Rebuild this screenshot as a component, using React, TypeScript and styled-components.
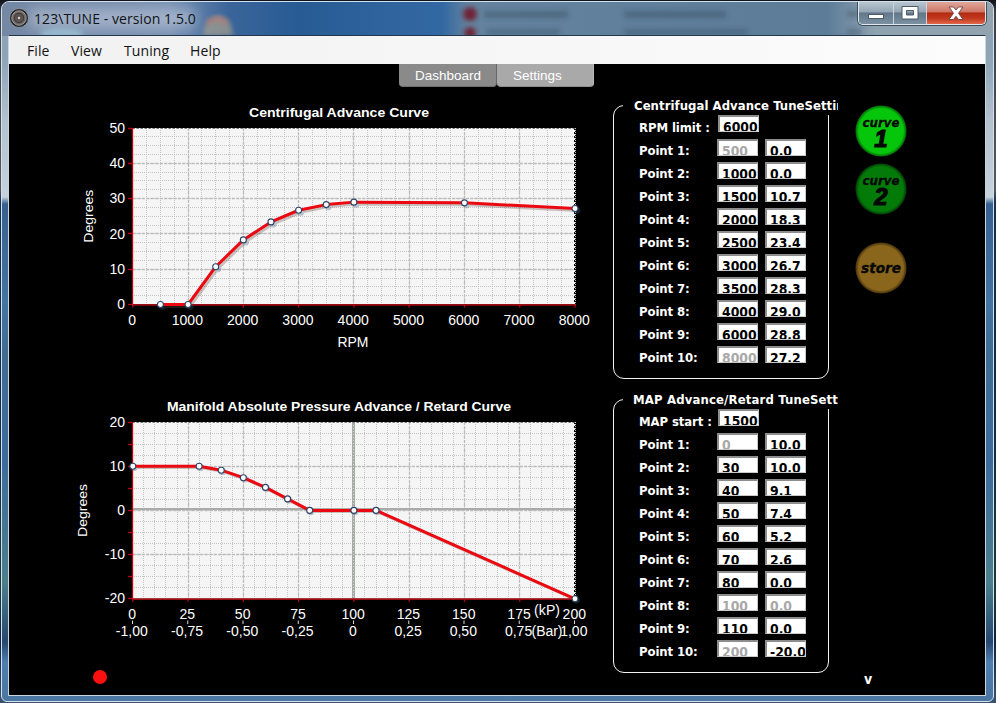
import React from "react";
import styled, { createGlobalStyle, css } from "styled-components";

const GlobalStyle = createGlobalStyle`
  * { box-sizing: border-box; }
  html, body { margin: 0; padding: 0; background: #0a1526; overflow: hidden; }
`;

const Desktop = styled.div`
  width: 996px;
  height: 703px;
  padding: 1px 2px 1px 1px;
  background: linear-gradient(180deg, #10121a 0, #3c4046 12px, #55585c 190px, #16304e 202px, #122a48 400px, #1c3a34 590px, #0e2240 640px, #3b5270 703px);
`;

const Window = styled.div`
  position: relative;
  width: 993px;
  height: 701px;
  padding: 0 8px 6px 6px;
  border: 1px solid #d3e2ef;
  border-radius: 8px 8px 6px 6px;
  overflow: hidden;
  background: linear-gradient(180deg, #8b9fb0 0, #8fa5b8 60px, #b4c2cf 120px, #c6d2dc 195px, #37608f 202px, #4474a2 300px, #3f6d92 350px, #3d6c9c 460px, #4b7f8c 580px, #27476f 640px, #4d7eae 660px, #4a76a0 701px);
`;

const Backdrop = styled.svg`
  position: absolute;
  left: 0;
  top: 0;
`;

const TitleBar = styled.header`
  position: relative;
  display: flex;
  align-items: flex-start;
  height: 33px;
  margin-right: -1px;
`;

const AppIcon = styled.svg`
  margin: 6px 0 0 1px;
  flex: none;
`;

const Title = styled.h1`
  margin: 6px 0 0 5px;
  font: 400 14px/21px "Open Sans", "Noto Sans", sans-serif;
  letter-spacing: 0.08px;
  color: #101318;
  white-space: nowrap;
`;

const Controls = styled.div`
  display: flex;
  margin-left: auto;
  height: 23px;
  border: 1px solid #e0e8ee;
  border-top: 0;
  border-radius: 0 0 5px 5px;
  overflow: hidden;
  box-shadow: 0 0 0 1px #3e4d5b;
`;

const ControlButton = styled.button<{ $width: number; $first?: boolean; $close?: boolean }>`
  width: ${(p) => p.$width}px;
  padding: 0;
  border: 0;
  border-left: ${(p) => (p.$first ? "0" : "1px solid #c9d4dd")};
  display: flex;
  align-items: center;
  justify-content: center;
  background: ${(p) =>
    p.$close
      ? "linear-gradient(180deg, #e0a79b 0, #cf7767 45%, #b3290f 50%, #c23a20 75%, #e2674a 100%)"
      : "linear-gradient(180deg, #b9c6d0 0, #93a5b4 45%, #62778a 50%, #7b90a1 100%)"};
`;

const Client = styled.div`
  position: relative;
  width: 978px;
  height: 661px;
  border: 1px solid #c8d6e2;
  border-top-color: #24364c;
  background: #000;
`;

const MenuBar = styled.nav`
  display: flex;
  height: 28px;
  padding-left: 18px;
  background: linear-gradient(90deg, #f1f1f2, #fcfcfc);
`;

const MenuItem = styled.span<{ $width: number }>`
  width: ${(p) => p.$width}px;
  font: 400 14px/29px "Open Sans", "Noto Sans", sans-serif;
  letter-spacing: 0.1px;
  color: #111;
  white-space: nowrap;
`;

const TabStrip = styled.div`
  display: flex;
  height: 23px;
  padding-left: 390px;
`;

const Tab = styled.div<{ $active?: boolean }>`
  width: ${(p) => (p.$active ? 98 : 97)}px;
  padding-left: 16px;
  border-radius: 0 0 4px 4px;
  border-bottom: 1px solid ${(p) => (p.$active ? "#707070" : "#8e8e8e")};
  border-right: 1px solid ${(p) => (p.$active ? "#666" : "#b8b8b8")};
  background: ${(p) => (p.$active ? "#8a8a8a" : "#a9a9a9")};
  font: 400 13.5px/23px "Liberation Sans", Arial, sans-serif;
  color: #fff;
`;

const Main = styled.main`
  display: flex;
  height: 608px;
`;

const ChartColumn = styled.section`
  width: 530px;
  margin: 8px 13px 0 61px;
  display: flex;
  flex-direction: column;
`;

const ChartSvg = styled.svg`
  display: block;
  flex: none;
  margin-bottom: 35px;
  font-family: "Liberation Sans", Arial, sans-serif;
  font-size: 14px;
  fill: #fff;
`;

const StatusLight = styled.div`
  width: 14px;
  height: 14px;
  margin: -15px 0 0 23px;
  border-radius: 50%;
  background: #fb1010;
`;

const PanelColumn = styled.section`
  display: flex;
  flex-direction: column;
  gap: 20px;
  width: 216px;
  padding-top: 18px;
`;

const boldText = css`
  font-family: "DejaVu Sans Condensed", "DejaVu Sans", Tahoma, sans-serif;
  font-stretch: condensed;
  font-weight: 700;
  white-space: nowrap;
`;

const Panel = styled.div`
  height: 274px;
  border: 1px solid #f2f2f2;
  border-radius: 11px;
`;

const Legend = styled.h2<{ $inset: number; $spacing: number }>`
  ${boldText}
  width: 215px;
  height: 19px;
  margin: -10px 0 0 9px;
  padding-left: ${(p) => p.$inset}px;
  overflow: hidden;
  background: #000;
  color: #fff;
  font-size: 13px;
  line-height: 19px;
  letter-spacing: ${(p) => p.$spacing}px;
`;

const Row = styled.label<{ $first?: boolean }>`
  display: flex;
  height: ${(p) => (p.$first ? 24 : 23)}px;
  padding-left: 25px;
`;

const RowLabel = styled.span<{ $first?: boolean }>`
  ${boldText}
  width: ${(p) => (p.$first ? 79 : 78)}px;
  padding-top: ${(p) => (p.$first ? 4 : 3)}px;
  font-size: 13px;
  line-height: 17px;
  letter-spacing: -0.1px;
  color: #fff;
`;

const Field = styled.span<{ $muted?: boolean }>`
  ${boldText}
  width: 41px;
  height: 17px;
  margin-right: 7px;
  padding: 0 0 0 3px;
  overflow: hidden;
  border-style: solid;
  border-width: 2px 1px 1px 2px;
  border-color: #8d8d8d #c9c9c9 #c9c9c9 #8d8d8d;
  background: #fff;
  color: ${(p) => (p.$muted ? "#a8a8a8" : "#000")};
  font-size: 13.8px;
  line-height: 21px;
`;

const ButtonColumn = styled.section`
  display: flex;
  flex-direction: column;
  width: 52px;
  margin-left: 26px;
  padding-top: 18px;
`;

const RoundButton = styled.button<{ $color: string; $edge: string; $gap: number; $shift?: number }>`
  display: flex;
  flex-direction: column;
  align-items: center;
  justify-content: center;
  flex: none;
  width: 52px;
  height: 52px;
  margin: 0 0 ${(p) => p.$gap}px;
  padding: ${(p) => p.$shift ?? 0}px 0 0;
  border: 0;
  border-radius: 50%;
  background: radial-gradient(circle closest-side, ${(p) => p.$color} 0 86%, ${(p) => p.$edge} 96%, #000 100%);
  color: #050805;
`;

const ButtonWord = styled.span<{ $size: number }>`
  font: italic 700 ${(p) => p.$size}px/12px "DejaVu Sans", Verdana, sans-serif;
  -webkit-text-stroke: 0.3px #050805;
`;

const ButtonDigit = styled.span`
  font: italic 700 24px/20px "Liberation Sans", Arial, sans-serif;
  -webkit-text-stroke: 1.2px #050805;
`;

const Version = styled.span`
  ${boldText}
  margin: auto 0 8px 9px;
  font-size: 14px;
  line-height: 16px;
  color: #fff;
`;

type Pt = [number, number];

interface ChartProps {
  title: string;
  titleX: number;
  titleWidth: number;
  top: number;
  plotTop: number;
  plotBottom: number;
  xMax: number;
  yMin: number;
  yMax: number;
  xMajor: number;
  xMinor: number;
  yTick: number;
  yLabelX: number;
  points: Pt[];
  shadow: number;
  children?: React.ReactNode;
}

const LEFT = 132.8;
const RIGHT = 575;

const range = (from: number, to: number, step: number) =>
  Array.from({ length: Math.round((to - from) / step) + 1 }, (_, i) => from + i * step);

function Chart(p: ChartProps) {
  const sx = (v: number) => LEFT + (v / p.xMax) * (RIGHT - LEFT);
  const sy = (v: number) => p.plotBottom - ((v - p.yMin) / (p.yMax - p.yMin)) * (p.plotBottom - p.plotTop);
  const snap = (v: number) => Math.floor(v) + 0.5;
  const line = p.points.map(([x, y]) => `${sx(x)},${sy(y)}`).join(" ");
  const midY = (p.plotTop + p.plotBottom) / 2;
  return (
    <ChartSvg width={530} height={260} viewBox={`70 ${p.top} 530 260`}>
      <text
        x={p.titleX}
        y={p.plotTop - 11}
        fontWeight={700}
        fontSize={13.6}
        textLength={p.titleWidth}
        lengthAdjust="spacingAndGlyphs"
      >
        {p.title}
      </text>
      <rect x={LEFT} y={p.plotTop} width={RIGHT - LEFT} height={p.plotBottom - p.plotTop} fill="#f5f5f5" />
      <g stroke="#c4c4c4" strokeWidth={1} strokeDasharray="1 1">
        {range(0, p.xMax, p.xMinor).map((v) => (
          <line key={`x${v}`} x1={snap(sx(v))} x2={snap(sx(v))} y1={p.plotTop} y2={p.plotBottom} />
        ))}
        {range(p.yMin, p.yMax, 2.5).map((v) => (
          <line key={`y${v}`} y1={snap(sy(v))} y2={snap(sy(v))} x1={132} x2={575} />
        ))}
      </g>
      <g stroke="#bcbcbc" strokeWidth={1.3} strokeDasharray="3 1.5">
        {range(p.xMajor, p.xMax - p.xMajor, p.xMajor).map((v) => (
          <line key={`x${v}`} x1={snap(sx(v))} x2={snap(sx(v))} y1={p.plotTop} y2={p.plotBottom} />
        ))}
        {range(p.yMin + 10, p.yMax - 10, 10).map((v) => (
          <line key={`y${v}`} y1={snap(sy(v))} y2={snap(sy(v))} x1={LEFT} x2={RIGHT} />
        ))}
      </g>
      {p.yMin < 0 && (
        <g stroke="#a9aba8" strokeWidth={2}>
          <line x1={LEFT} x2={RIGHT} y1={509} y2={509} />
          <line x1={353.5} x2={353.5} y1={p.plotTop} y2={p.plotBottom} strokeWidth={3} />
          <line x1={353.5} x2={353.5} y1={p.plotTop} y2={p.plotBottom} strokeWidth={1} stroke="#d6d6d6" strokeDasharray="1 2" />
        </g>
      )}
      <line x1={574.5} x2={574.5} y1={p.plotTop} y2={p.plotBottom} stroke="#000" strokeDasharray="2 2" />
      <line x1={LEFT} x2={RIGHT} y1={p.plotTop + 0.5} y2={p.plotTop + 0.5} stroke="#777" strokeDasharray="2 2" />
      <g stroke="#c40010" strokeWidth={1.3}>
        <line x1={132.5} x2={132.5} y1={p.plotTop} y2={p.plotBottom} />
        <line
          x1={LEFT}
          x2={RIGHT}
          y1={p.plotBottom + 0.3}
          y2={p.plotBottom + 0.3}
          stroke="#9c0a12"
          strokeWidth={1.8}
        />
        {range(p.yMin, p.yMax, p.yTick).map((v) => (
          <line key={`y${v}`} x1={128} x2={132} y1={snap(sy(v))} y2={snap(sy(v))} />
        ))}
        {range(0, p.xMax, p.xMajor).map((v) => (
          <line key={`x${v}`} x1={sx(v)} x2={sx(v)} y1={p.plotBottom} y2={p.plotBottom + 3} />
        ))}
      </g>
      <g transform={`translate(${p.shadow} ${p.shadow})`} opacity={0.32}>
        <polyline points={line} fill="none" stroke="#6b5044" strokeWidth={3} />
        {p.points.map(([x, y]) => (
          <circle key={x} cx={sx(x)} cy={sy(y)} r={3.6} fill="#4a5a70" />
        ))}
      </g>
      <polyline points={line} fill="none" stroke="#ec0810" strokeWidth={3} strokeLinejoin="round" />
      {p.points.map(([x, y]) => (
        <circle key={x} cx={sx(x)} cy={sy(y)} r={3} fill="#fff" stroke="#2d4468" strokeWidth={1.1} />
      ))}
      {range(p.yMin, p.yMax, 10).map((v) => (
        <text key={v} x={125} y={sy(v) + 4.6} textAnchor="end">
          {v}
        </text>
      ))}
      {range(0, p.xMax, p.xMajor).map((v) => (
        <text key={v} x={sx(v) - 0.7} y={p.plotBottom + 20.5} textAnchor="middle">
          {v}
        </text>
      ))}
      <text
        transform={`translate(${p.yLabelX} ${midY}) rotate(-90)`}
        textAnchor="middle"
        fontSize={13}
        textLength={53}
        lengthAdjust="spacingAndGlyphs"
      >
        Degrees
      </text>
      {p.children}
    </ChartSvg>
  );
}

const centrifugal: Pt[] = [
  [500, 0], [1000, 0], [1500, 10.7], [2000, 18.3], [2500, 23.4],
  [3000, 26.7], [3500, 28.3], [4000, 29], [6000, 28.8], [8000, 27.2],
];

const manifold: Pt[] = [
  [0, 10], [30, 10], [40, 9.1], [50, 7.4], [60, 5.2],
  [70, 2.6], [80, 0], [100, 0], [110, 0], [200, -20],
];

const barLabels = ["-1,00", "-0,75", "-0,50", "-0,25", "0", "0,25", "0,50", "0,75", "1,00"];

interface SettingsProps {
  legend: string;
  inset: number;
  spacing: number;
  limitLabel: string;
  limit: string;
  points: Pt[];
  locked: number[];
  lockedValues?: number[];
}

function Settings({ legend, inset, spacing, limitLabel, limit, points, locked, lockedValues = [] }: SettingsProps) {
  return (
    <Panel>
      <Legend $inset={inset} $spacing={spacing}>{legend}</Legend>
      <Row $first>
        <RowLabel $first>{limitLabel}</RowLabel>
        <Field>{limit}</Field>
      </Row>
      {points.map(([x, y], i) => (
        <Row key={x}>
          <RowLabel>Point {i + 1}:</RowLabel>
          <Field $muted={locked.includes(i)}>{x}</Field>
          <Field $muted={lockedValues.includes(i)}>{y.toFixed(1).replace(".", ",")}</Field>
        </Row>
      ))}
    </Panel>
  );
}

export default function App() {
  return (
    <>
      <GlobalStyle />
      <Desktop>
        <Window>
          <Backdrop width={991} height={34} viewBox="2 2 991 34">
            <defs>
              <linearGradient id="glass" x1="0" x2="1">
                <stop offset="0" stopColor="#7488a4" />
                <stop offset="0.17" stopColor="#7890b2" />
                <stop offset="0.23" stopColor="#3a659a" />
                <stop offset="0.3" stopColor="#285b94" />
                <stop offset="0.445" stopColor="#3369a3" />
                <stop offset="0.47" stopColor="#64839e" />
                <stop offset="0.83" stopColor="#5c7c98" />
                <stop offset="0.88" stopColor="#8fa2b0" />
                <stop offset="1" stopColor="#93a3b0" />
              </linearGradient>
              <filter id="soft" x="-30%" y="-80%" width="160%" height="260%">
                <feGaussianBlur stdDeviation="2.5" />
              </filter>
              <filter id="haze" x="-30%" y="-80%" width="160%" height="260%">
                <feGaussianBlur stdDeviation="7" />
              </filter>
            </defs>
            <rect x="0" y="0" width="996" height="36" fill="url(#glass)" />
            <rect x="30" y="9" width="165" height="19" fill="#c5cddd" opacity="0.6" filter="url(#haze)" />
            <ellipse cx="62" cy="34" rx="22" ry="6" fill="#a8dce8" opacity="0.5" filter="url(#soft)" />
            <path d="M203 36a15 20 0 0 1 30 0z" fill="#a7a08c" opacity="0.7" filter="url(#soft)" />
            <path d="M207 24q10-11 21 0" fill="none" stroke="#bf7770" strokeWidth="4" opacity="0.8" filter="url(#soft)" />
            <g filter="url(#soft)" fill="#2c4359">
              <circle cx="470" cy="14" r="7" fill="#6d2336" />
              <circle cx="470" cy="33" r="6" fill="#6d2336" />
              <rect x="484" y="11" width="84" height="7" opacity="0.4" />
              <rect x="486" y="29" width="74" height="6" opacity="0.35" />
              <rect x="624" y="11" width="102" height="7" opacity="0.4" />
              <rect x="624" y="29" width="124" height="6" opacity="0.35" />
              <rect x="847" y="11" width="12" height="6" opacity="0.4" />
              <rect x="847" y="29" width="14" height="6" opacity="0.4" />
            </g>
          </Backdrop>
          <TitleBar>
            <AppIcon width="20" height="20" viewBox="0 0 20 20">
              <circle cx="10" cy="10" r="9.5" fill="#25272b" stroke="#9aa0a8" strokeWidth="0.8" />
              <circle cx="10" cy="10" r="7.2" fill="#716b69" stroke="#9a9795" strokeWidth="1" />
              <circle cx="10" cy="10" r="4.8" fill="#5a5350" stroke="#3a3533" />
              <circle cx="10" cy="10" r="1.2" fill="#d9cfc8" />
            </AppIcon>
            <Title>123\TUNE - version 1.5.0</Title>
            <Controls>
              <ControlButton $width={34} $first aria-label="Minimize">
                <svg width="18" height="18" viewBox="0 0 18 18">
                  <rect x="1.5" y="10.5" width="15" height="4" fill="#fff" stroke="#4d5a67" />
                </svg>
              </ControlButton>
              <ControlButton $width={33} aria-label="Maximize">
                <svg width="18" height="16" viewBox="0 0 18 16">
                  <path
                    d="M1 1.5h16v12.500h-16z M5.500 5.500v4.500h7v-4.500z"
                    fill="#fff"
                    fillRule="evenodd"
                    stroke="#4d5a67"
                  />
                </svg>
              </ControlButton>
              <ControlButton $width={59} $close aria-label="Close">
                <svg width="16" height="15" viewBox="0 0 16 15">
                  <path
                    d="M1 1h4.500l2.500 3 2.500-3h4.500l-4.500 6.200 4.500 6.300h-4.500l-2.500-3.200-2.500 3.200h-4.500l4.500-6.300z"
                    fill="#fff"
                    stroke="#6a4545"
                    strokeWidth="0.9"
                  />
                </svg>
              </ControlButton>
            </Controls>
          </TitleBar>
          <Client>
            <MenuBar>
              <MenuItem $width={44}>File</MenuItem>
              <MenuItem $width={53}>View</MenuItem>
              <MenuItem $width={66}>Tuning</MenuItem>
              <MenuItem $width={40}>Help</MenuItem>
            </MenuBar>
            <TabStrip>
              <Tab $active>Dashboard</Tab>
              <Tab>Settings</Tab>
            </TabStrip>
            <Main>
              <ChartColumn>
                <Chart
                  title="Centrifugal Advance Curve"
                  titleX={249}
                  titleWidth={180}
                  top={95}
                  plotTop={128}
                  plotBottom={304.5}
                  xMax={8000}
                  yMin={0}
                  yMax={50}
                  xMajor={1000}
                  xMinor={250}
                  yTick={10}
                  yLabelX={93}
                  points={centrifugal}
                  shadow={2}
                >
                  <text x={353} y={347} textAnchor="middle" textLength={31} fontSize={13.8} lengthAdjust="spacingAndGlyphs">
                    RPM
                  </text>
                </Chart>
                <Chart
                  title="Manifold Absolute Pressure Advance / Retard Curve"
                  titleX={167}
                  titleWidth={344}
                  top={390}
                  plotTop={422}
                  plotBottom={598.8}
                  xMax={200}
                  yMin={-20}
                  yMax={20}
                  xMajor={25}
                  xMinor={5}
                  yTick={5}
                  yLabelX={87}
                  points={manifold}
                  shadow={1.2}
                >
                  {barLabels.map((label, i) => (
                    <g key={label}>
                      <line x1={132.5 + i * 55.25} x2={132.5 + i * 55.25} y1={620.5} y2={624} stroke="#ddd" />
                      <text x={131.8 + i * 55.25} y={635.8} textAnchor="middle">
                        {label}
                      </text>
                    </g>
                  ))}
                  <text x={534} y={614.8} textLength={26}>(kP)</text>
                  <text x={531.5} y={635.8} textLength={31}>(Bar)</text>
                </Chart>
                <StatusLight />
              </ChartColumn>
              <PanelColumn>
                <Settings
                  legend="Centrifugal Advance TuneSettings"
                  inset={11}
                  spacing={0.05}
                  limitLabel="RPM limit :"
                  limit="6000"
                  points={centrifugal}
                  locked={[0, 9]}
                />
                <Settings
                  legend="MAP Advance/Retard TuneSettings"
                  inset={10}
                  spacing={0.15}
                  limitLabel="MAP start :"
                  limit="1500"
                  points={manifold}
                  locked={[0, 7, 9]}
                  lockedValues={[7]}
                />
              </PanelColumn>
              <ButtonColumn>
                <RoundButton $color="#05c60b" $edge="#047208" $gap={6} $shift={3}>
                  <ButtonWord $size={11.8}>curve</ButtonWord>
                  <ButtonDigit>1</ButtonDigit>
                </RoundButton>
                <RoundButton $color="#047a09" $edge="#034306" $gap={27} $shift={3}>
                  <ButtonWord $size={11.8}>curve</ButtonWord>
                  <ButtonDigit>2</ButtonDigit>
                </RoundButton>
                <RoundButton $color="#8a651c" $edge="#4d380f" $gap={0}>
                  <ButtonWord $size={13.6}>store</ButtonWord>
                </RoundButton>
                <Version>v</Version>
              </ButtonColumn>
            </Main>
          </Client>
        </Window>
      </Desktop>
    </>
  );
}
